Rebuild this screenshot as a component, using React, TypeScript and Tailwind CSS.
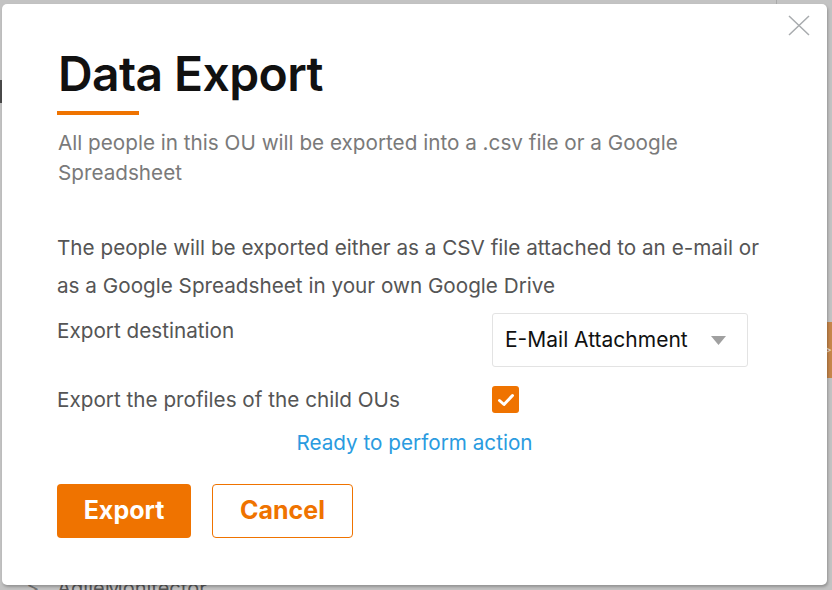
export default function App() {
  return (
    <div
      className="relative w-[832px] h-[590px] overflow-hidden bg-[#c3c3c3]"
      style={{ fontFamily: 'Inter, "Noto Sans", sans-serif' }}
    >
      {/* page behind the overlay */}
      <div className="absolute left-0 top-[80px] w-[3px] h-[23px] bg-[#4a4a4a]" />
      <div className="absolute left-[776px] top-0 w-px h-[5px] bg-[#a9a9a9]" />
      <div className="absolute right-0 top-[322px] w-[6px] h-[56px] bg-[#c6864a] flex items-center justify-end text-[#e8d8c8] text-[12px] leading-none">
        &gt;
      </div>
      <div className="absolute left-[26px] top-[578px] flex items-center gap-[18px] text-[20px] text-[#555] leading-none">
        <span className="text-[#777]">&gt;</span>
        <span>AgileMonitector</span>
      </div>

      {/* dialog */}
      <div className="relative ml-[2px] mt-[4px] w-[825px] h-[581px] bg-white rounded-[5px] shadow-[1px_2px_3px_rgba(0,0,0,0.25)] px-[55px] pt-[46px] flex flex-col">
        <button className="absolute top-[11px] right-[17px] w-[22px] h-[21px]">
          <svg viewBox="0 0 22 21" className="w-[22px] h-[21px]" fill="none" stroke="#a8abae" strokeWidth={1.5}>
            <path d="M1 1l20 19M21 1L1 20" />
          </svg>
        </button>

        <h1 className="pl-[1px] text-[48px] leading-none font-semibold text-[#111] tracking-[-0.6px]">Data Export</h1>
        <div className="mt-[13px] w-[82px] h-1 bg-[#ef7300]" />

        <p className="mt-[13px] pl-[1px] w-[660px] text-[20.7px] leading-[30px] text-[#7a7a7a]">
          All people in this OU will be exported into a .csv file or a Google Spreadsheet
        </p>

        <p className="mt-[41px] w-[712px] text-[20.7px] leading-[38px] text-[#555]">
          The people will be exported either as a CSV file attached to an e-mail or as a Google Spreadsheet in your own Google Drive
        </p>

        <div className="mt-[8px] flex items-start">
          <div className="w-[435px] pt-[6px] text-[20.7px] leading-6 text-[#555]">Export destination</div>
          <div className="w-[256px] h-[54px] border border-[#e3e3e3] rounded-[3px] flex items-center justify-between pl-[12px] pr-[21px]">
            <span className="text-[21px] text-[#111]">E-Mail Attachment</span>
            <svg viewBox="0 0 15 9" className="w-[15px] h-[9px]">
              <path d="M0 0h15L7.5 9z" fill="#a0a0a0" />
            </svg>
          </div>
        </div>

        <div className="mt-[19px] flex items-center">
          <div className="w-[435px] text-[20.7px] leading-6 text-[#555]">Export the profiles of the child OUs</div>
          <div className="w-[27px] h-[27px] rounded-[3px] bg-[#ef7300] flex items-center justify-center">
            <svg viewBox="0 0 18 14" className="w-[18px] h-[14px]" fill="none" stroke="white" strokeWidth={3} strokeLinecap="round" strokeLinejoin="round">
              <path d="M2.5 7.5l4.5 4 8.5-9" />
            </svg>
          </div>
        </div>

        <div className="mt-[15px] text-center text-[20.7px] leading-[30px] text-[#2a9be0]">Ready to perform action</div>

        <div className="mt-[26px] flex gap-[21px]">
          <button className="w-[134px] h-[54px] rounded-[4px] bg-[#ef7300] text-white text-[25px] font-bold">Export</button>
          <button className="w-[141px] h-[54px] rounded-[4px] border border-[#ef7300] bg-white text-[#ef7300] text-[25px] font-bold">Cancel</button>
        </div>
      </div>
    </div>
  )
}
